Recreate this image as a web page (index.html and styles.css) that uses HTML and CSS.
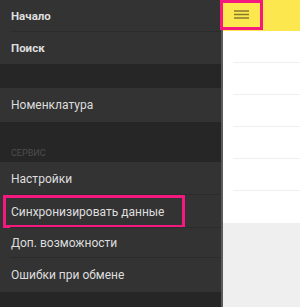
FILE: index.html
```html
<!DOCTYPE html>
<html lang="ru">
<head>
<meta charset="utf-8">
<link rel="stylesheet" href="styles.css">
</head>
<body>
<div class="app">
  <nav class="drawer">
    <div class="item bold h31 div">Начало</div>
    <div class="item bold h31">Поиск</div>
    <div class="gap g25"></div>
    <div class="item h34">Номенклатура</div>
    <div class="section">СЕРВИС</div>
    <div class="item h33 div">Настройки</div>
    <div class="item h33 div hl">Синхронизировать данные<span class="mark"></span></div>
    <div class="item h30 div">Доп. возможности</div>
    <div class="item h34">Ошибки при обмене</div>
    <div class="gap fill"></div>
  </nav>
  <div class="edge"></div>
  <main class="content">
    <header class="topbar">
      <button class="menu" aria-label="menu">
        <svg width="15" height="9" viewBox="0 0 15 9"><path d="M0 1h15M0 4.5h15M0 8h15" stroke="#857a2c" stroke-width="1.6"/></svg>
      </button>
    </header>
    <div class="list">
      <div class="row"></div>
      <div class="row"></div>
      <div class="row"></div>
      <div class="row"></div>
      <div class="row"></div>
      <div class="row last"></div>
    </div>
    <div class="rest"></div>
  </main>
</div>
</body>
</html>
```
FILE: styles.css
```css
html, body { margin: 0; padding: 0; }
body { width: 300px; height: 307px; overflow: hidden; font-family: Roboto, "Noto Sans", sans-serif; }
.app { display: flex; height: 307px; }
.drawer { width: 221px; background: #333333; display: flex; flex-direction: column; }
.item { position: relative; display: flex; align-items: center; padding-left: 11px; color: #dedede; font-size: 12px; box-sizing: border-box; }
.item.bold { font-weight: bold; font-size: 11.5px; }
.item.div::after { content: ""; position: absolute; left: 10px; right: 0; bottom: 0; height: 1px; background: #2c2c2c; }
.h31 { height: 32px; }
.h33 { height: 33px; }
.h34 { height: 34px; }
.h30 { height: 30px; }
.gap { background: #262626; }
.g25 { height: 24px; }
.gap.fill { flex: 1; }
.section { height: 40px; background: #262626; color: #4e4e4e; font-size: 9px; padding-left: 11px; box-sizing: border-box; padding-top: 26px; }
.mark { position: absolute; left: 3px; top: 0; width: 182px; height: 33px; border: 3px solid #f5197f; box-sizing: border-box; }
.edge { width: 2px; background: #5a5a5a; }
.content { flex: 1; display: flex; flex-direction: column; background: #efefef; position: relative; }
.topbar { height: 31px; background: #fde74f; position: relative; }
.menu { position: absolute; left: -3px; top: 0; width: 43px; height: 30px; border: 3px solid #f5197f; background: #fde74f; padding: 0; box-sizing: border-box; display: flex; align-items: center; justify-content: center; }
.menu svg { display: block; margin-top: -2px; margin-left: -1px; }
.list { background: #fff; padding-left: 10px; }
.row { height: 32px; border-bottom: 1px solid #efefef; box-sizing: border-box; }
.row.last { border-bottom: none; height: 32px; }
```
